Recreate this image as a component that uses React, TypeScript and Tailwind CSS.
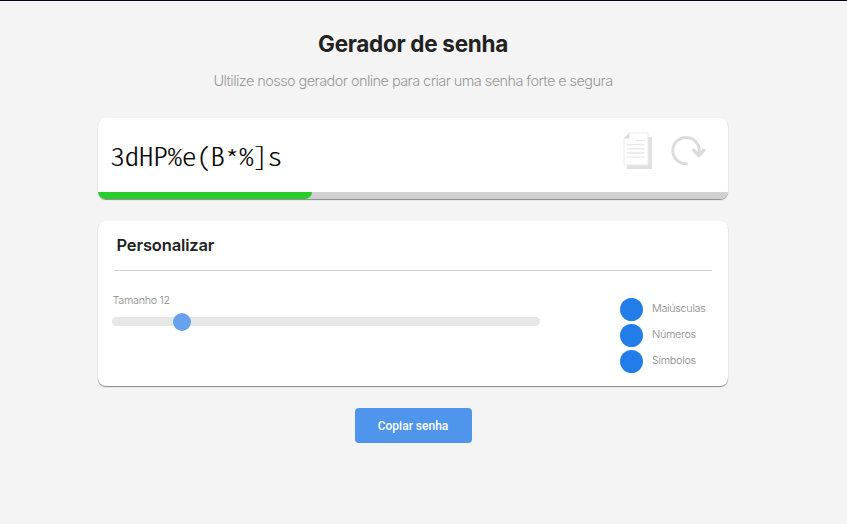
import React from "react";

const options = ["Maiúsculas", "Números", "Símbolos"];

function CopyIcon() {
  return (
    <svg width="30" height="38" viewBox="0 0 30 38" className="block">
      <path d="M4 5H29V37H4z" fill="#e1e1e1" />
      <path d="M6.5 1H25V33H1V6.5z" fill="#fff" stroke="#ebebeb" />
      <path d="M6.500 1V6.500H1z" fill="#dcdcdc" />
      <path d="M13 8.600h8.500M4 12.600H21.500M4 16.800H21.500M4 21H21.500M4 25.200H21.500" stroke="#e8e8e8" strokeWidth="1.3" />
    </svg>
  );
}

function RefreshIcon() {
  return (
    <svg width="36" height="32" viewBox="0 0 36 32" className="block" fill="none" stroke="#dcdcdc" strokeWidth="3" strokeLinecap="round" strokeLinejoin="round">
      <path d="M15.500 28.800A13.200 13.200 0 1 1 27.900 18.500V20" />
      <path d="M22.700 15.200L27.900 20.500L32.800 15.200" strokeWidth="3.400" />
    </svg>
  );
}

export default function App() {
  return (
    <div className="h-[524px] w-full border-t border-[#05051a] bg-[#f4f4f4] pr-[21px] font-['Inter',sans-serif]">
      <main className="mx-auto flex w-[630px] flex-col items-center">
        <h1 className="mt-[28px] text-[22.500px] leading-[30px] font-bold tracking-[-0.300px] text-[#222] whitespace-nowrap">Gerador de senha</h1>
        <p className="mt-[12px] text-[14.5px] leading-[20px] font-light tracking-[-0.57px] text-[#999] whitespace-nowrap">
          Ultilize nosso gerador online para criar uma senha forte e segura
        </p>

        <section className="mt-[27px] flex h-[81px] w-full flex-col overflow-hidden rounded-lg bg-white shadow-[0_1px_1px_#888]">
          <div className="flex h-[74px] shrink-0 items-start justify-between pr-[22px] pl-[12.500px]">
            <span className="mt-[22.500px] origin-center scale-y-[0.88] font-['Noto_Sans_CJK_JP',monospace] text-[28.6px] leading-[28px] font-light text-black [font-feature-settings:'hwid'] [-webkit-text-stroke:0.15px_black]">
              3dHP%e(B<span className="relative top-[4px]">*</span>%]s
            </span>
            <div className="flex pt-[14px]">
              <CopyIcon />
              <div className="mr-[-1px] ml-[18px] pt-[3px]"><RefreshIcon /></div>
            </div>
          </div>
          <div className="h-[7px] bg-[#d0d0d0]">
            <div className="h-full w-[214px] rounded-br-lg bg-[#28cc2b]" />
          </div>
        </section>

        <section className="mt-[22px] h-[165px] w-full rounded-lg bg-white px-[14px] shadow-[0_1px_1px_#888]">
          <h2 className="ml-[4.500px] pt-[12px] text-[16.500px] leading-[24px] font-semibold tracking-[-0.15px] text-[#222]">Personalizar</h2>
          <hr className="mt-[13px] mr-[2px] ml-[2px] border-[#d3d3d3]" />
          <div className="flex justify-between">
            <div className="w-[428px] pt-[22px]">
              <div className="pl-[0.500px] text-[10.8px] leading-[16px] font-light tracking-[-0.3px] text-[#888]">Tamanho 12</div>
              <div className="mt-[8px] flex h-[9px] items-center rounded-full bg-[#e7e7e7] pl-[61px]">
                <div className="size-[18px] rounded-full bg-[#67a2ef]" />
              </div>
            </div>
            <div className="flex w-[94px] flex-col gap-[3px] pt-[27px]">
              {options.map((name) => (
                <div key={name} className="flex h-[23px] gap-[9px]">
                  <span className="size-[23px] shrink-0 rounded-full bg-[#237de9]" />
                  <span className="pt-[3px] text-[10.8px] leading-[16px] font-light tracking-[-0.3px] text-[#888]">{name}</span>
                </div>
              ))}
            </div>
          </div>
        </section>

        <button className="mt-[22px] h-[35px] w-[117px] rounded-[4px] bg-[#4e95eb] font-['Roboto',sans-serif] text-[12px] font-medium text-white">
          Copiar senha
        </button>
      </main>
    </div>
  );
}
